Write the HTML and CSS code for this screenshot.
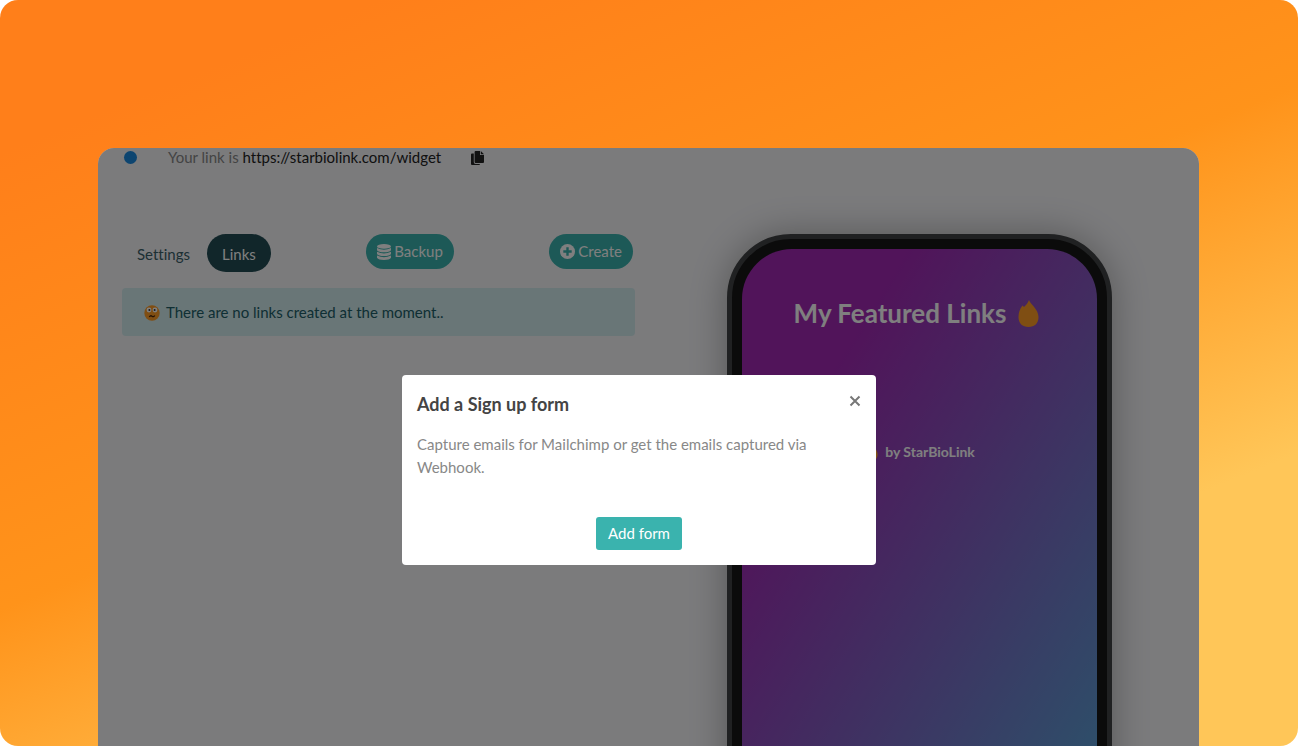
FILE: index.html
```html
<!DOCTYPE html>
<html lang="en">
<head>
    <meta charset="UTF-8">
    <meta name="viewport" content="width=device-width, initial-scale=1.0">
    <title>StarBioLink - Widget</title>
    <link rel="stylesheet" href="styles.css">
</head>
<body>

    <div class="stage">
        <div class="app">

            <div class="link-bar">
                <span class="dot"></span>
                <p>Your link is <a href="#">https://starbiolink.com/widget</a></p>
                <button class="copy" aria-label="Copy link">
                    <svg width="14" height="14" viewBox="0 0 14 14">
                        <path d="M1 2.5 Q0 2.5 0 3.5 V13 Q0 14 1 14 H8 Q9 14 9 13 H4.5 Q2.8 13 2.8 11.3 V2.5 Z" fill="#222"/>
                        <path d="M4.6 0 H9 V4 H13 V11 Q13 12 12 12 H4.6 Q3.6 12 3.6 11 V1 Q3.6 0 4.6 0 Z M9.8 0 L13 3.2 H9.8 Z" fill="#222"/>
                    </svg>
                </button>
            </div>

            <div class="columns">
                <div class="editor">
                    <div class="toolbar">
                        <nav class="tabs">
                            <a href="#" class="tab">Settings</a>
                            <a href="#" class="tab active">Links</a>
                        </nav>
                        <button class="btn pill">
                            <svg width="14" height="16" viewBox="0 0 14 16" fill="#fff">
                                <ellipse cx="7" cy="2.4" rx="7" ry="2.4"/>
                                <path d="M0 3.9 Q7 7.4 14 3.9 V6.2 Q12.5 8.2 7 8.2 Q1.5 8.2 0 6.2 Z"/>
                                <path d="M0 7.7 Q7 11.2 14 7.7 V10 Q12.5 12 7 12 Q1.5 12 0 10 Z"/>
                                <path d="M0 11.5 Q7 15 14 11.5 V13.8 Q12.5 16 7 16 Q1.5 16 0 13.8 Z"/>
                            </svg>
                            Backup
                        </button>
                        <button class="btn pill">
                            <svg width="15" height="15" viewBox="0 0 15 15">
                                <circle cx="7.5" cy="7.5" r="7.5" fill="#fff"/>
                                <path d="M7.5 3.3 V11.7 M3.3 7.5 H11.7" stroke="#3ab3ae" stroke-width="2.4"/>
                            </svg>
                            Create
                        </button>
                    </div>
                    <div class="alert">
                        <svg width="16" height="16" viewBox="0 0 16 16">
                            <circle cx="8" cy="8" r="7.7" fill="#ff9c27"/>
                            <circle cx="5" cy="5" r="2.4" fill="#fff"/>
                            <circle cx="11" cy="5" r="2.4" fill="#fff"/>
                            <circle cx="5.4" cy="5" r="1" fill="#333"/>
                            <circle cx="10.6" cy="5" r="1" fill="#333"/>
                            <path d="M5.3 12 Q6.5 10 8 11.2 T10.8 10.5" fill="none" stroke="#4a2508" stroke-width="1.3"/>
                        </svg>
                        There are no links created at the moment..
                    </div>
                </div>

                <div class="preview">
                    <div class="phone">
                        <div class="screen">
                            <h1>
                                My Featured Links
                                <svg width="21" height="27" viewBox="0 0 21 27">
                                    <path d="M11 0 C12 4 20.5 9 20.5 17 C20.5 23.5 16.5 27 10.5 27 C4.5 27 0.5 23.5 0.5 17 C0.5 12.5 2 8.5 4.5 5.5 L6 7 C8 5 10 3 11 0 Z" fill="#ff9c27"/>
                                </svg>
                            </h1>
                            <p class="credit">
                                <svg width="14" height="18" viewBox="0 0 21 27">
                                    <path d="M11 0 C12 4 20.5 9 20.5 17 C20.5 23.5 16.5 27 10.5 27 C4.5 27 0.5 23.5 0.5 17 C0.5 12.5 2 8.5 4.5 5.5 L6 7 C8 5 10 3 11 0 Z" fill="#ff9c27"/>
                                </svg>
                                by StarBioLink
                            </p>
                        </div>
                    </div>
                </div>
            </div>

            <div class="overlay">
                <div class="modal" role="dialog" aria-labelledby="modal-title">
                    <div class="modal-head">
                        <h2 id="modal-title">Add a Sign up form</h2>
                        <button class="close" aria-label="Close">
                            <svg width="12" height="12" viewBox="0 0 12 12">
                                <path d="M1.5 1.5 L10.5 10.5 M10.5 1.5 L1.5 10.5" stroke="#777" stroke-width="2"/>
                            </svg>
                        </button>
                    </div>
                    <p>Capture emails for Mailchimp or get the emails captured via Webhook.</p>
                    <button class="btn">Add form</button>
                </div>
            </div>

        </div>
    </div>

</body>
</html>
```
FILE: styles.css
```css
* {
    box-sizing: border-box;
}

body {
    margin: 0;
    background: #fff;
    font-family: Lato, "Liberation Sans", sans-serif;
    font-size: 15px;
    line-height: 23px;
    font-variant-ligatures: none;
}

h1, h2, p {
    margin: 0;
}

button {
    font: inherit;
    border: none;
    cursor: pointer;
}

a {
    text-decoration: none;
}

.stage {
    display: flex;
    height: 100vh;
    padding: 148px 99px 0 98px;
    border-radius: 18px;
    background: linear-gradient(158deg, #ff7f1a 12%, #ff931a 48%, #ffc658 77%);
}

.app {
    position: relative;
    flex: 1;
    overflow: hidden;
    border-radius: 16px 16px 0 0;
    background: #f6f6f9;
}

.link-bar {
    display: flex;
    align-items: center;
    height: 19px;
    padding-left: 26px;
    color: #888;
}

.link-bar a {
    color: #222;
}

.dot {
    width: 13px;
    height: 13px;
    margin-right: 31px;
    border-radius: 50%;
    background: #1a8ae0;
}

.copy {
    display: flex;
    margin-left: 30px;
    padding: 0;
    background: none;
}

.columns {
    display: flex;
    justify-content: space-between;
    padding: 67px 87px 0 24px;
}

.editor {
    flex: 0 1 513px;
}

.toolbar {
    display: flex;
    justify-content: space-between;
    align-items: flex-start;
    margin-bottom: 16px;
    padding-right: 2px;
}

.tabs {
    display: flex;
    gap: 2px;
}

.tab {
    padding: 9px 15px 6px;
    border-radius: 20px;
    color: #3a6068;
}

.tab.active {
    background: #224c54;
    color: #fff;
}

.btn {
    display: flex;
    align-items: center;
    justify-content: center;
    gap: 3px;
    padding: 5px 12px;
    border-radius: 3px;
    background: #3ab3ae;
    color: #fff;
}

.pill {
    padding: 6px 11px;
    border-radius: 18px;
}

.alert {
    display: flex;
    align-items: center;
    gap: 6px;
    padding: 13px 22px 12px;
    border-radius: 4px;
    background: #d2ecee;
    color: #205e68;
}

.phone {
    width: 385px;
    height: 790px;
    padding: 10px;
    border: 5px solid #404244;
    border-radius: 64px;
    background: #161616;
    box-shadow: 0 0 36px rgba(0, 0, 0, 0.3);
}

.screen {
    height: 100%;
    padding-top: 46px;
    border-radius: 50px;
    background: linear-gradient(122deg, #a228b4 20%, #5b9fd4 82%);
    color: #fff;
    text-align: center;
}

.screen h1 {
    display: flex;
    justify-content: center;
    gap: 12px;
    margin-bottom: 109px;
    padding-right: 6px;
    font-size: 26px;
    line-height: 36px;
}

.screen h1 svg {
    margin-top: 5px;
}

.credit {
    display: flex;
    align-items: center;
    justify-content: center;
    gap: 7px;
    font-size: 14px;
    font-weight: bold;
}

.overlay {
    position: absolute;
    inset: 0;
    display: flex;
    justify-content: center;
    align-items: flex-start;
    padding: 227px 19px 0 0;
    background: rgba(0, 0, 0, 0.5);
}

.modal {
    width: 474px;
    padding: 15px;
    border-radius: 4px;
    background: #fff;
    color: #888;
}

.modal-head {
    display: flex;
    justify-content: space-between;
    align-items: flex-start;
    margin-bottom: 15px;
}

.modal h2 {
    color: #444;
    font-size: 18px;
    line-height: 28px;
}

.close {
    display: flex;
    margin-top: 5px;
    padding: 0;
    background: none;
}

.modal .btn {
    margin: 38px auto 0;
}
```
